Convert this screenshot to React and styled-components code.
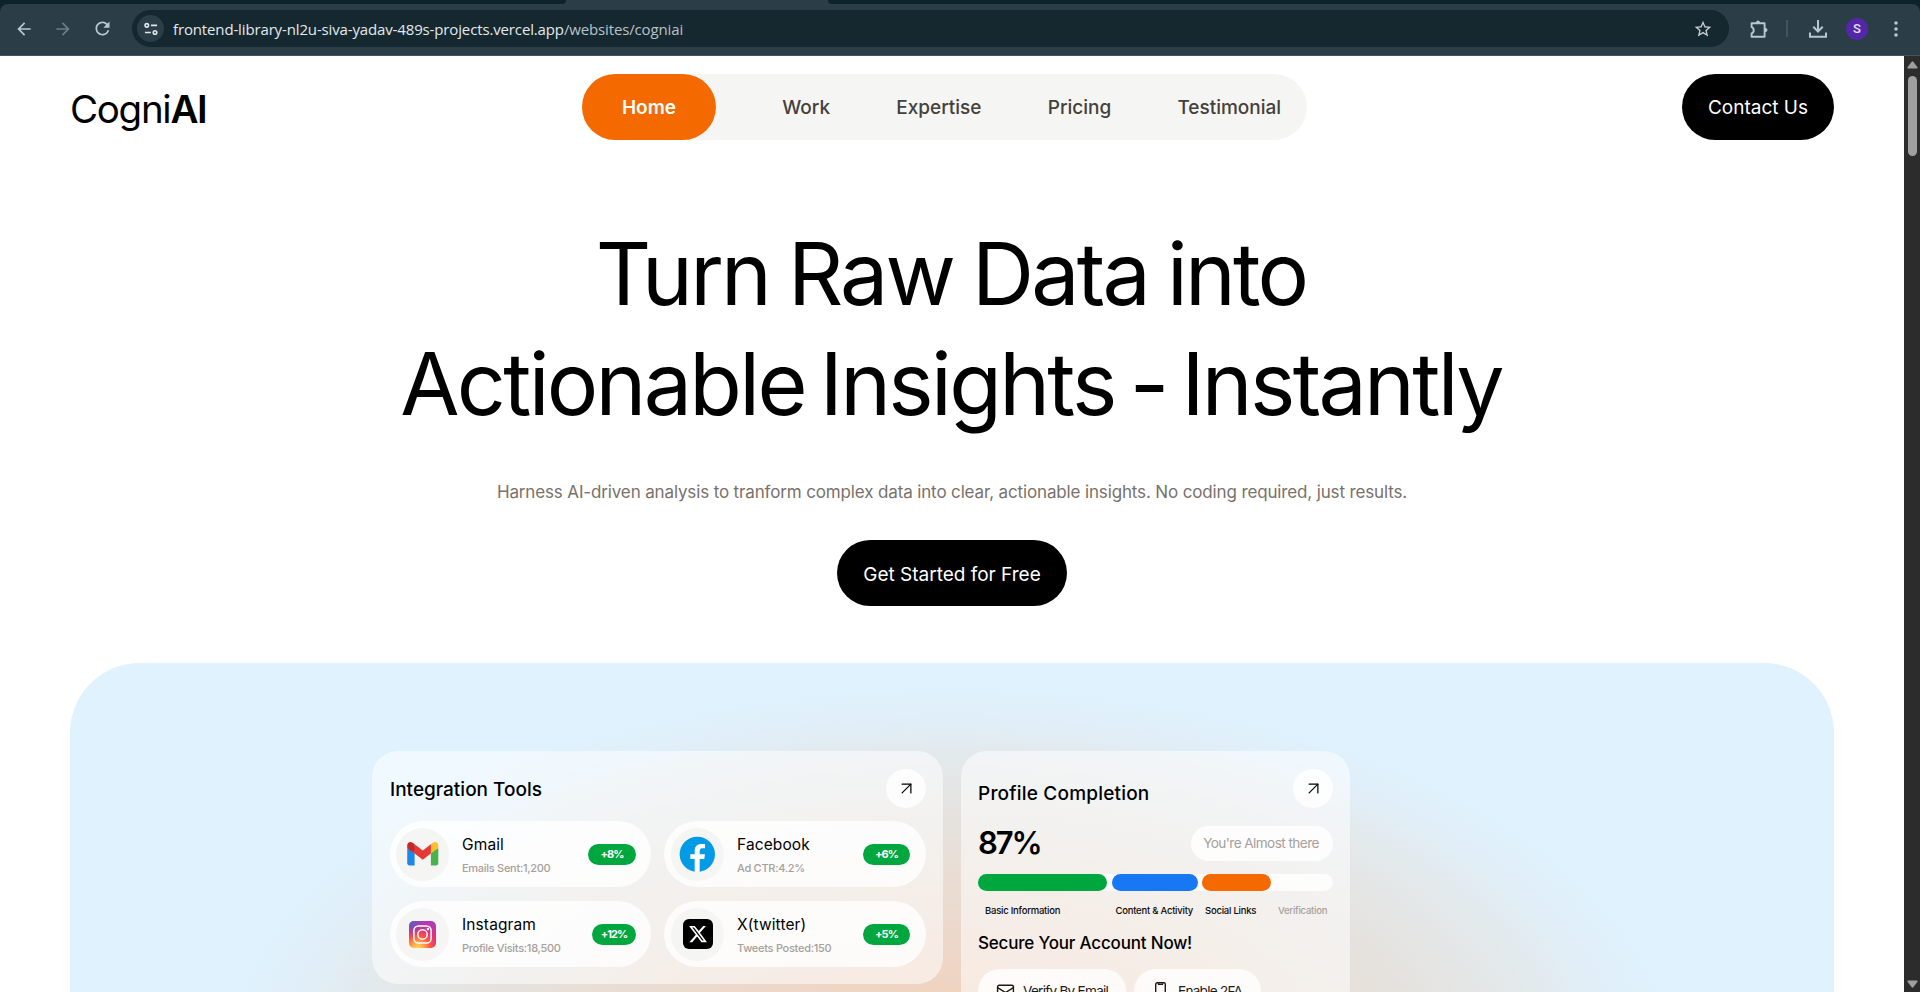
import React from "react";
import styled, { createGlobalStyle } from "styled-components";
import { MdArrowBack, MdArrowForward, MdRefresh, MdStarOutline } from "react-icons/md";
import { FaXTwitter } from "react-icons/fa6";
import { ArrowUpRight, Mail } from "lucide-react";

const GlobalStyle = createGlobalStyle`
  *, *::before, *::after { box-sizing: border-box; }
  body { margin: 0; overflow: hidden; background: #fff; font-family: Inter, "Liberation Sans", sans-serif; color: #000; }
  h1, h2, h3, p { margin: 0; font-weight: inherit; }
  button { border: 0; padding: 0; font: inherit; }
  svg { display: block; flex: none; }
`;

/* Browser chrome */
const Window = styled.div`
  display: flex;
  flex-direction: column;
  height: 992px;
  overflow: hidden;
`;
const Chrome = styled.div`
  background: #0d232b;
  flex: none;
`;
const TabStrip = styled.div`
  display: grid;
  grid-template-columns: 566px 262px 1fr;
  height: 4px;
  background: #2b3d46;
`;
const TabGap = styled.div`
  background: #0d232b;
  grid-column: ${(p) => p.$column};
  border-radius: ${(p) => (p.$column === 1 ? "0 0 6px 0" : "0 0 0 6px")};
`;
const Toolbar = styled.div`
  display: flex;
  align-items: center;
  height: 52px;
  padding: 0 16px 2px 14px;
  background: #2b3d46;
  border-bottom: 1px solid #45535a;
  border-radius: 8px 8px 0 0;
  color: #b3c9d5;
`;
const NavIcons = styled.div`
  display: flex;
  gap: 19px;
  width: 118px;
  align-items: center;
`;
const Dimmed = styled.span`
  color: #6d7d86;
`;
const Omnibox = styled.div`
  display: flex;
  align-items: center;
  width: 1597px;
  height: 37px;
  padding: 0 16px 0 5px;
  border-radius: 19px;
  background: #15272f;
  color: #c7cdd1;
`;
const SiteInfo = styled.span`
  display: grid;
  place-items: center;
  width: 27px;
  height: 27px;
  border-radius: 50%;
  background: #2b3d46;
  color: #dfe7eb;
`;
const Url = styled.span`
  flex: 1;
  margin-left: 9px;
  font: 400 15px/20px "Open Sans", "Noto Sans", sans-serif;
  letter-spacing: -0.14px;
  color: #b9c2c7;
`;
const Host = styled.span`
  color: #e3eaee;
`;
const Actions = styled.div`
  display: flex;
  align-items: center;
  flex: 1;
  padding-left: 21px;
`;
const Divider = styled.span`
  width: 2px;
  height: 17px;
  margin: 0 21px 0 18px;
  background: #43555f;
`;
const Avatar = styled.span`
  width: 22px;
  height: 22px;
  margin: 0 26px 0 19px;
  border-radius: 50%;
  background: #5327a8;
  color: #e9e0fa;
  font: 500 13px/22px Roboto, sans-serif;
  text-align: center;
`;

/* Viewport */
const Viewport = styled.div`
  display: flex;
  flex: 1;
  min-height: 0;
`;
const Page = styled.main`
  flex: 1;
  padding: 18px 70px 0;
  overflow: hidden;
  background: #fff;
`;
const Scrollbar = styled.div`
  display: flex;
  flex-direction: column;
  align-items: center;
  width: 16px;
  padding: 5px 0 4px 1px;
  background: #2c2c2c;
  color: #9f9f9f;
`;
const Thumb = styled.div`
  width: 9px;
  height: 80px;
  margin: 7px 0 auto;
  border-radius: 5px;
  background: #9f9f9f;
`;

/* Site header */
const Header = styled.header`
  display: grid;
  grid-template-columns: 512px auto 1fr;
  height: 66px;
`;
const Logo = styled.div`
  align-self: center;
  padding-top: 3px;
  font-size: 38.5px;
  line-height: 44px;
  letter-spacing: -1.3px;
`;
const LogoAccent = styled.span`
  font-weight: 600;
`;
const Nav = styled.nav`
  display: flex;
  align-items: center;
  gap: 66.2px;
  width: 725px;
  height: 66px;
  border-radius: 33px;
  background: #f5f5f4;
`;
const NavLink = styled.a`
  height: 66px;
  font-size: 19px;
  line-height: 67px;
  font-weight: 500;
  color: #44403b;
  ${(p) =>
    p.$active &&
    `width: 134px; text-align: center; font-weight: 600; border-radius: 33px; background: #f56a00; color: #fff;`}
`;
const PillButton = styled.button`
  height: 66px;
  width: ${(p) => p.$width}px;
  padding-top: ${(p) => p.$nudge || 0}px;
  border-radius: 33px;
  background: #000;
  color: #fff;
  font-size: 19px;
`;
const ContactButton = styled(PillButton)`
  justify-self: end;
`;

/* Hero */
const Hero = styled.section`
  display: flex;
  flex-direction: column;
  align-items: center;
`;
const Headline = styled.h1`
  display: flex;
  flex-direction: column;
  align-items: center;
  margin-top: 79px;
  font-size: 86px;
  line-height: 110px;
`;
const HeadlineLine = styled.span`
  letter-spacing: ${(p) => p.$tracking}px;
  word-spacing: ${(p) => p.$wordGap}px;
  margin-left: -2px;
`;
const Lead = styled.p`
  margin: 39px 0 34px;
  font-size: 17px;
  line-height: 28px;
  letter-spacing: -0.14px;
  color: #79716b;
`;
const Showcase = styled.section`
  display: flex;
  align-items: flex-start;
  gap: 18px;
  height: 640px;
  margin-top: 57px;
  padding: 88px 0 0 302px;
  border-radius: 70px;
  background: radial-gradient(
    ellipse 735px 378px at 880px 397px,
    #f1cfb9 0%, #efd4c2 20%, #e9ddd3 48%, #e5e2de 64%, #e3e9eb 80%, #e0effa 92%, #dff2fe 100%
  ) #dff2fe;
`;
const Card = styled.article`
  width: ${(p) => p.$width}px;
  height: ${(p) => p.$height}px;
  padding: 18px 17px 17px ${(p) => p.$inset}px;
  border-radius: 26px;
  background: rgba(255, 255, 255, 0.52);
`;
const CardHeader = styled.div`
  display: flex;
  align-items: center;
  justify-content: space-between;
  height: 39px;
`;
const CardTitle = styled.h2`
  padding-top: ${(p) => p.$drop}px;
  font-size: 19px;
  line-height: 28px;
  font-weight: 500;
  letter-spacing: ${(p) => p.$tracking || 0}px;
`;
const RoundButton = styled.span`
  display: grid;
  place-items: center;
  width: 40px;
  height: 39px;
  border-radius: 50%;
  background: rgba(255, 255, 255, 0.82);
`;

/* Integration tools */
const ToolGrid = styled.div`
  display: grid;
  grid-template-columns: 261px 262px;
  gap: 14px 13px;
  margin-top: 13px;
`;
const Tool = styled.div`
  display: flex;
  align-items: center;
  height: 66px;
  padding: 0 15px 0 6px;
  border-radius: 33px;
  background: rgba(255, 255, 255, 0.8);

  &:nth-child(even) {
    padding: 0 16px 0 7px;
  }
`;
const ToolIcon = styled.span`
  display: grid;
  place-items: center;
  width: 53px;
  height: 53px;
  margin-right: 13px;
  border-radius: 50%;
  background: #f5f5f4;
`;
const ToolText = styled.div`
  flex: 1;
`;
const ToolName = styled.h3`
  padding-top: 4px;
  font-size: 15.5px;
  line-height: 22px;
  font-weight: 400;
  letter-spacing: 0.12px;
`;
const ToolStat = styled.p`
  margin-top: 2px;
  font-size: 11px;
  line-height: 20px;
  font-weight: 500;
  letter-spacing: -0.28px;
  color: #a6a09b;
`;
const Badge = styled.span`
  width: ${(p) => p.$width}px;
  height: 21px;
  border-radius: 11px;
  background: #00a63e;
  color: #fff;
  font-size: 11px;
  line-height: 21px;
  font-weight: 700;
  letter-spacing: -0.9px;
  text-align: center;
`;
const XTile = styled.span`
  display: grid;
  place-items: center;
  width: 30px;
  height: 30px;
  border-radius: 6px;
  background: #000;
  color: #fff;
`;

/* Profile completion */
const ScoreRow = styled.div`
  display: flex;
  align-items: center;
  justify-content: space-between;
  height: 35px;
  margin-top: 18px;
`;
const Score = styled.span`
  font-size: 31px;
  line-height: 33px;
  height: 35px;
  font-weight: 600;
  letter-spacing: -2.1px;
`;
const Hint = styled.span`
  width: 142px;
  height: 35px;
  padding-right: 2px;
  border-radius: 18px;
  background: rgba(255, 255, 255, 0.8);
  color: #a6a09b;
  font-size: 13.6px;
  line-height: 34px;
  letter-spacing: -0.57px;
  text-align: center;
`;
const Progress = styled.div`
  display: flex;
  gap: 4.5px;
  height: 17px;
  margin-top: 13px;
  border-radius: 9px;
  background: rgba(255, 255, 255, 0.8);
`;
const Segment = styled.span`
  width: ${(p) => p.$width}px;
  border-radius: 9px;
  background: ${(p) => p.$color};
`;
const StepLabels = styled.div`
  display: grid;
  grid-template-columns: 130.5px 89.5px 73px auto;
  margin: 13px -10px 0 7px;
`;
const StepLabel = styled.span`
  font-size: 9.5px;
  line-height: 14px;
  font-weight: 500;
  letter-spacing: -0.24px;
  white-space: nowrap;
  color: ${(p) => (p.$muted ? "#a6a09b" : "#0c0a09")};
`;
const SecureTitle = styled.h3`
  margin: 12px 0 13px;
  font-size: 17px;
  line-height: 26px;
  font-weight: 450;
  letter-spacing: -0.18px;
`;
const SecureActions = styled.div`
  display: flex;
  gap: 8px;
`;
const SecureButton = styled.button`
  display: flex;
  align-items: center;
  gap: ${(p) => p.$gap}px;
  width: ${(p) => p.$width}px;
  height: 44px;
  padding-left: ${(p) => p.$inset}px;
  border-radius: 22px;
  background: rgba(255, 255, 255, 0.8);
  color: #1c1917;
  font-size: 13.6px;
  letter-spacing: -0.75px;
  white-space: nowrap;
`;

const TuneIcon = () => (
  <svg width="14" height="14" viewBox="0 0 15 15" fill="none" stroke="currentColor" strokeWidth="1.7">
    <circle cx="3" cy="3.6" r="1.9" />
    <path d="M7.5 3.6H14M1 11.2H7.3" />
    <circle cx="11.8" cy="11.2" r="1.9" />
  </svg>
);
const ExtensionIcon = () => (
  <svg width="18" height="18" viewBox="0 0 18 18" fill="none" stroke="currentColor" strokeWidth="1.9" strokeLinejoin="round">
    <path d="M1.6 3.2H14.6V16.8H1.6V13.3C4.4 12.6 4.4 8 1.6 7.2Z" />
    <path d="M5.9 3C5.9-.5 10.1-.5 10.1 3ZM14.8 7.8C18.3 7.8 18.3 12 14.8 12Z" fill="currentColor" stroke="none" />
  </svg>
);
const DownloadIcon = () => (
  <svg width="18" height="18" viewBox="0 0 18 18" fill="none" stroke="currentColor" strokeWidth="2">
    <path d="M9 0v11M4.3 6.8 9 11.5l4.7-4.7M1 12.5V16.8H17V12.5" />
  </svg>
);
const DotsIcon = () => (
  <svg width="4" height="16" viewBox="0 0 4 16" fill="currentColor">
    <circle cx="2" cy="2" r="1.8" />
    <circle cx="2" cy="8" r="1.8" />
    <circle cx="2" cy="14" r="1.8" />
  </svg>
);
const PhoneIcon = () => (
  <svg width="11" height="18" viewBox="0 0 11 18" fill="none" stroke="currentColor" strokeWidth="1.4">
    <rect x=".7" y=".7" width="9.6" height="16.6" rx="1.6" />
    <path d="M3.6 1.2V2.4H7.4V1.2" />
  </svg>
);
const ScrollArrow = ({ down }) => (
  <svg width="11" height="8" viewBox="0 0 11 8" fill="currentColor">
    <path d={down ? "M1 .5h9q1 .3.3 1.4L6.3 7.2q-.8.9-1.6 0L.7 1.9Q0 .8 1 .5Z" : "M1 7.5h9q1-.3.3-1.4L6.3.8q-.8-.9-1.6 0L.7 6.1Q0 7.2 1 7.5Z"} />
  </svg>
);
const GmailIcon = () => (
  <svg width="35.5" height="35.5" viewBox="0 0 48 48">
    <path fill="#4caf50" d="M45,16.2l-5,2.75l-5,4.75L35,40h7c1.657,0,3-1.343,3-3V16.2z" />
    <path fill="#1e88e5" d="M3,16.2l3.614,1.71L13,23.7V40H6c-1.657,0-3-1.343-3-3V16.2z" />
    <path fill="#e53935" d="M35 11.2 24 19.45 13 11.2 12 17 13 23.7 24 31.95 35 23.7 36 17z" />
    <path fill="#c62828" d="M3,12.298V16.2l10,7.5V11.2L9.876,8.859C9.132,8.301,8.228,8,7.298,8C4.924,8,3,9.924,3,12.298z" />
    <path fill="#fbc02d" d="M45,12.298V16.2l-10,7.5V11.2l3.124-2.341C38.868,8.301,39.772,8,40.702,8C43.076,8,45,9.924,45,12.298z" />
  </svg>
);
const FacebookIcon = () => (
  <svg width="44.6" height="44.6" viewBox="0 0 48 48">
    <circle cx="24" cy="24" r="19" fill="#039be5" />
    <path fill="#fff" d="M26.572,29.036h4.917l0.772-4.995h-5.69v-2.73c0-2.075,0.678-3.915,2.619-3.915h3.119v-4.359c-0.548-0.074-1.707-0.236-3.897-0.236c-4.573,0-7.254,2.415-7.254,7.917v3.323h-4.701v4.995h4.701v13.729C22.089,42.905,23.032,43,24,43c0.875,0,1.729-0.08,2.572-0.194V29.036z" />
  </svg>
);
const InstagramIcon = () => (
  <svg width="27" height="27" viewBox="0 0 27 27">
    <defs>
      <radialGradient id="igWarm" cx="32%" cy="103%" r="105%">
        <stop offset="0" stopColor="#ffdd55" />
        <stop offset=".2" stopColor="#ffb04a" />
        <stop offset=".45" stopColor="#ff5543" />
        <stop offset=".7" stopColor="#e0317a" />
        <stop offset="1" stopColor="#b13bb5" />
      </radialGradient>
      <radialGradient id="igCool" cx="0%" cy="0%" r="65%">
        <stop offset="0" stopColor="#4168c9" />
        <stop offset="1" stopColor="#7a45c9" stopOpacity="0" />
      </radialGradient>
    </defs>
    <rect width="27" height="27" rx="5" fill="url(#igWarm)" />
    <rect width="27" height="27" rx="5" fill="url(#igCool)" />
    <g fill="none" stroke="#fff" strokeWidth="1.5">
      <rect x="4.9" y="4.9" width="17.2" height="17.2" rx="4.6" />
      <circle cx="13.5" cy="13.5" r="4.7" />
    </g>
    <circle cx="18.9" cy="8.1" r="1.3" fill="#fff" />
  </svg>
);
const XIcon = () => (
  <XTile>
    <FaXTwitter size={20} />
  </XTile>
);

const tools = [
  { name: "Gmail", stat: "Emails Sent:1,200", change: "+8%", badge: 48, Icon: GmailIcon },
  { name: "Facebook", stat: "Ad CTR:4.2%", change: "+6%", badge: 47, Icon: FacebookIcon },
  { name: "Instagram", stat: "Profile Visits:18,500", change: "+12%", badge: 44, Icon: InstagramIcon },
  { name: "X(twitter)", stat: "Tweets Posted:150", change: "+5%", badge: 47, Icon: XIcon },
];

export default function App() {
  return (
    <Window>
      <GlobalStyle />
      <Chrome>
        <TabStrip>
          <TabGap $column={1} />
          <TabGap $column={3} />
        </TabStrip>
        <Toolbar>
          <NavIcons>
            <MdArrowBack size={20} />
            <Dimmed><MdArrowForward size={20} /></Dimmed>
            <MdRefresh size={21} />
          </NavIcons>
          <Omnibox>
            <SiteInfo><TuneIcon /></SiteInfo>
            <Url>
              <Host>frontend-library-nl2u-siva-yadav-489s-projects.vercel.app</Host>/websites/cogniai
            </Url>
            <MdStarOutline size={20} />
          </Omnibox>
          <Actions>
            <ExtensionIcon />
            <Divider />
            <DownloadIcon />
            <Avatar>S</Avatar>
            <DotsIcon />
          </Actions>
        </Toolbar>
      </Chrome>
      <Viewport>
        <Page>
          <Header>
            <Logo>Cogni<LogoAccent>AI</LogoAccent></Logo>
            <Nav>
              <NavLink $active>Home</NavLink>
              <NavLink>Work</NavLink>
              <NavLink>Expertise</NavLink>
              <NavLink>Pricing</NavLink>
              <NavLink>Testimonial</NavLink>
            </Nav>
            <ContactButton $width={152} $nudge={1}>Contact Us</ContactButton>
          </Header>
          <Hero>
            <Headline>
              <HeadlineLine $tracking={-2.8} $wordGap={-2.5}>Turn Raw Data into</HeadlineLine>
              <HeadlineLine $tracking={-2.7} $wordGap={-6.5}>Actionable Insights - Instantly</HeadlineLine>
            </Headline>
            <Lead>
              Harness AI-driven analysis to tranform complex data into clear, actionable insights. No coding required, just results.
            </Lead>
            <PillButton $width={230} $nudge={2}>Get Started for Free</PillButton>
          </Hero>
          <Showcase>
            <Card $width={571} $height={233} $inset={18}>
              <CardHeader>
                <CardTitle $drop={2}>Integration Tools</CardTitle>
                <RoundButton><ArrowUpRight size={21} strokeWidth={1.4} /></RoundButton>
              </CardHeader>
              <ToolGrid>
                {tools.map(({ name, stat, change, badge, Icon }) => (
                  <Tool key={name}>
                    <ToolIcon><Icon /></ToolIcon>
                    <ToolText>
                      <ToolName>{name}</ToolName>
                      <ToolStat>{stat}</ToolStat>
                    </ToolText>
                    <Badge $width={badge}>{change}</Badge>
                  </Tool>
                ))}
              </ToolGrid>
            </Card>
            <Card $width={389} $height={420} $inset={17}>
              <CardHeader>
                <CardTitle $drop={10} $tracking={0.2}>Profile Completion</CardTitle>
                <RoundButton><ArrowUpRight size={21} strokeWidth={1.4} /></RoundButton>
              </CardHeader>
              <ScoreRow>
                <Score>87%</Score>
                <Hint>You're Almost there</Hint>
              </ScoreRow>
              <Progress>
                <Segment $width={129} $color="#00a63e" />
                <Segment $width={86} $color="#1877f2" />
                <Segment $width={69} $color="#f56a00" />
              </Progress>
              <StepLabels>
                <StepLabel>Basic Information</StepLabel>
                <StepLabel>Content &amp; Activity</StepLabel>
                <StepLabel>Social Links</StepLabel>
                <StepLabel $muted>Verification</StepLabel>
              </StepLabels>
              <SecureTitle>Secure Your Account Now!</SecureTitle>
              <SecureActions>
                <SecureButton $width={148} $gap={8} $inset={18}>
                  <Mail size={19} strokeWidth={1.8} />
                  Verify By Email
                </SecureButton>
                <SecureButton $width={127} $gap={12} $inset={21}>
                  <PhoneIcon />
                  Enable 2FA
                </SecureButton>
              </SecureActions>
            </Card>
          </Showcase>
        </Page>
        <Scrollbar>
          <ScrollArrow />
          <Thumb />
          <ScrollArrow down />
        </Scrollbar>
      </Viewport>
    </Window>
  );
}
